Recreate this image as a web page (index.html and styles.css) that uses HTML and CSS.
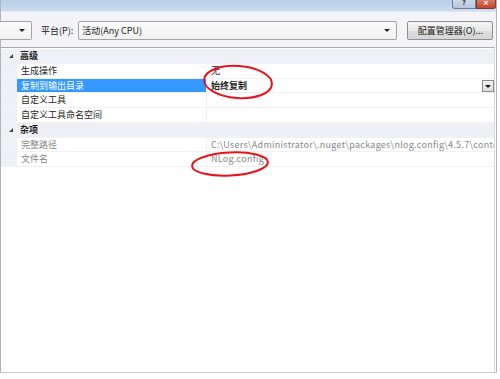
FILE: index.html
```html
<!DOCTYPE html>
<html lang="zh-CN">
<head>
    <meta charset="UTF-8">
    <title>属性</title>
    <link rel="stylesheet" href="styles.css">
</head>
<body>
    <div class="window">
        <div class="titlebar">
            <div class="caption-btn help">?</div>
            <div class="caption-btn close">×</div>
        </div>

        <div class="toolbar">
            <div class="combo small"><span class="arrow"></span></div>
            <label class="tool-label">平台(P):</label>
            <div class="combo wide">活动(Any CPU)<span class="arrow"></span></div>
            <button class="tool-btn">配置管理器(O)...</button>
        </div>

        <div class="grid">
            <div class="row category">
                <span class="gutter"><span class="expander"></span></span>
                <span class="cat-name">高级</span>
            </div>
            <div class="row">
                <span class="gutter"></span>
                <span class="name">生成操作</span>
                <span class="value">无</span>
            </div>
            <div class="row selected">
                <span class="gutter"></span>
                <span class="name">复制到输出目录</span>
                <span class="value bold">始终复制<span class="drop-btn"></span></span>
            </div>
            <div class="row">
                <span class="gutter"></span>
                <span class="name">自定义工具</span>
                <span class="value"></span>
            </div>
            <div class="row">
                <span class="gutter"></span>
                <span class="name">自定义工具命名空间</span>
                <span class="value"></span>
            </div>
            <div class="row category">
                <span class="gutter"><span class="expander"></span></span>
                <span class="cat-name">杂项</span>
            </div>
            <div class="row readonly">
                <span class="gutter"></span>
                <span class="name">完整路径</span>
                <span class="value latin">C:\Users\Administrator\.nuget\packages\nlog.config\4.5.7\content\NLog.config</span>
            </div>
            <div class="row readonly">
                <span class="gutter"></span>
                <span class="name">文件名</span>
                <span class="value latin">NLog.config</span>
            </div>

            <!-- red annotation marks drawn over the grid -->
            <svg class="marks" width="497" height="160" viewBox="0 0 497 160">
                <ellipse cx="237" cy="34" rx="34" ry="16" transform="rotate(4 237 34)" />
                <ellipse cx="229" cy="116" rx="38" ry="11.5" transform="rotate(-3 229 116)" />
            </svg>
        </div>
    </div>
</body>
</html>
```

FILE: styles.css
```css
body {
    margin: 0;
    width: 500px;
    height: 379px;
    background: #fff;
    font-family: "Noto Sans CJK SC", "Noto Sans", sans-serif;
    font-size: 9px;
    color: #1e1e1e;
    overflow: hidden;
}
.window {
    width: 495px;
    height: 372px;
    border-left: 1px solid #b4b4b4;
    border-right: 1px solid #b4b4b4;
    border-bottom: 1px solid #c8c8c8;
    display: flex;
    flex-direction: column;
    background: #fff;
}
.titlebar {
    height: 11px;
    border-bottom: 1px solid #dde8f4;
    background: linear-gradient(#b7cfe8, #c9dcef);
    display: flex;
    justify-content: flex-end;
    align-items: flex-start;
}
.caption-btn {
    height: 10px;
    margin-top: -1px;
    display: flex;
    align-items: center;
    justify-content: center;
    font-family: "DejaVu Sans", sans-serif;
    font-size: 7px;
    line-height: 7px;
    font-weight: bold;
    border: 1px solid #6d7f96;
    border-top: none;
    box-sizing: border-box;
}
.caption-btn.help {
    width: 24px;
    color: #3b4a5e;
    background: linear-gradient(#cfdae7, #b8c8da);
    border-radius: 0 0 0 3px;
}
.caption-btn.close {
    width: 20px;
    color: #fff;
    background: linear-gradient(#d9826f, #c2442c);
    border-color: #7a3b32;
    border-radius: 0 0 3px 0;
}
.toolbar {
    height: 35px;
    background: #f4f3f8;
    display: flex;
    align-items: center;
    padding-top: 1px;
    box-sizing: border-box;
}
.combo {
    height: 19px;
    border: 1px solid #a4a4a4;
    border-radius: 2px;
    background: linear-gradient(#fbfbfb, #f1f1f1);
    box-sizing: border-box;
    display: flex;
    align-items: center;
    position: relative;
    padding-left: 3px;
    font-size: 9px;
}
.combo.small {
    width: 33px;
    margin-left: -2px;
    border-left: none;
    border-radius: 0 2px 2px 0;
}
.combo.wide {
    width: 319px;
    margin-left: 5px;
}
.arrow {
    position: absolute;
    right: 6px;
    top: 7px;
    width: 0;
    height: 0;
    border-left: 3px solid transparent;
    border-right: 3px solid transparent;
    border-top: 3px solid #222;
}
.tool-label {
    margin-left: 9px;
    color: #222;
}
.tool-btn {
    margin-left: 10px;
    width: 86px;
    height: 19px;
    padding: 0;
    font-family: inherit;
    font-size: 9px;
    color: #222;
    border: 1px solid #8e8f8f;
    border-radius: 2px;
    background: linear-gradient(#f6f6f6 0%, #e8e8e8 50%, #dcdcdc 51%, #d6d6d6 100%);
}
.grid {
    flex: 1;
    border-top: 1px solid #a9a9a9;
    border-right: 1px solid #d8d8d8;
    margin-right: 1px;
    padding-top: 1px;
    position: relative;
}
.row {
    display: flex;
    height: 14.75px;
    line-height: 14px;
    border-bottom: 1px solid #f1f1f4;
    box-sizing: border-box;
}
.gutter {
    width: 16px;
    flex: none;
    background: #efeff6;
    position: relative;
}
.expander {
    position: absolute;
    left: 8px;
    top: 5px;
    width: 0;
    height: 0;
    border-left: 4px solid transparent;
    border-bottom: 4px solid #444;
}
.category {
    background: #efeff6;
    font-weight: bold;
}
.cat-name {
    padding-left: 3px;
}
.name {
    width: 190px;
    flex: none;
    padding-left: 4px;
    box-sizing: border-box;
    border-right: 1px solid #f1f1f4;
    white-space: nowrap;
    overflow: hidden;
}
.value {
    flex: 1;
    padding-left: 4px;
    white-space: nowrap;
    overflow: hidden;
    position: relative;
}
.value.bold {
    font-weight: bold;
}
.value.latin {
    letter-spacing: 0.28px;
}
.selected .name {
    background: #3399ff;
    color: #fff;
}
.readonly .name,
.readonly .value {
    color: #888;
}
.drop-btn {
    position: absolute;
    right: 0;
    top: 1px;
    width: 12px;
    height: 12px;
    box-sizing: border-box;
    border: 1px solid #8a8a8a;
    background: linear-gradient(#f4f4f4, #dedede);
}
.drop-btn::after {
    content: "";
    position: absolute;
    left: 2px;
    top: 4px;
    border-left: 3px solid transparent;
    border-right: 3px solid transparent;
    border-top: 3px solid #111;
}
.marks {
    position: absolute;
    left: 0;
    top: 0;
    fill: none;
    stroke: #e8141b;
    stroke-width: 2;
    pointer-events: none;
}
```
